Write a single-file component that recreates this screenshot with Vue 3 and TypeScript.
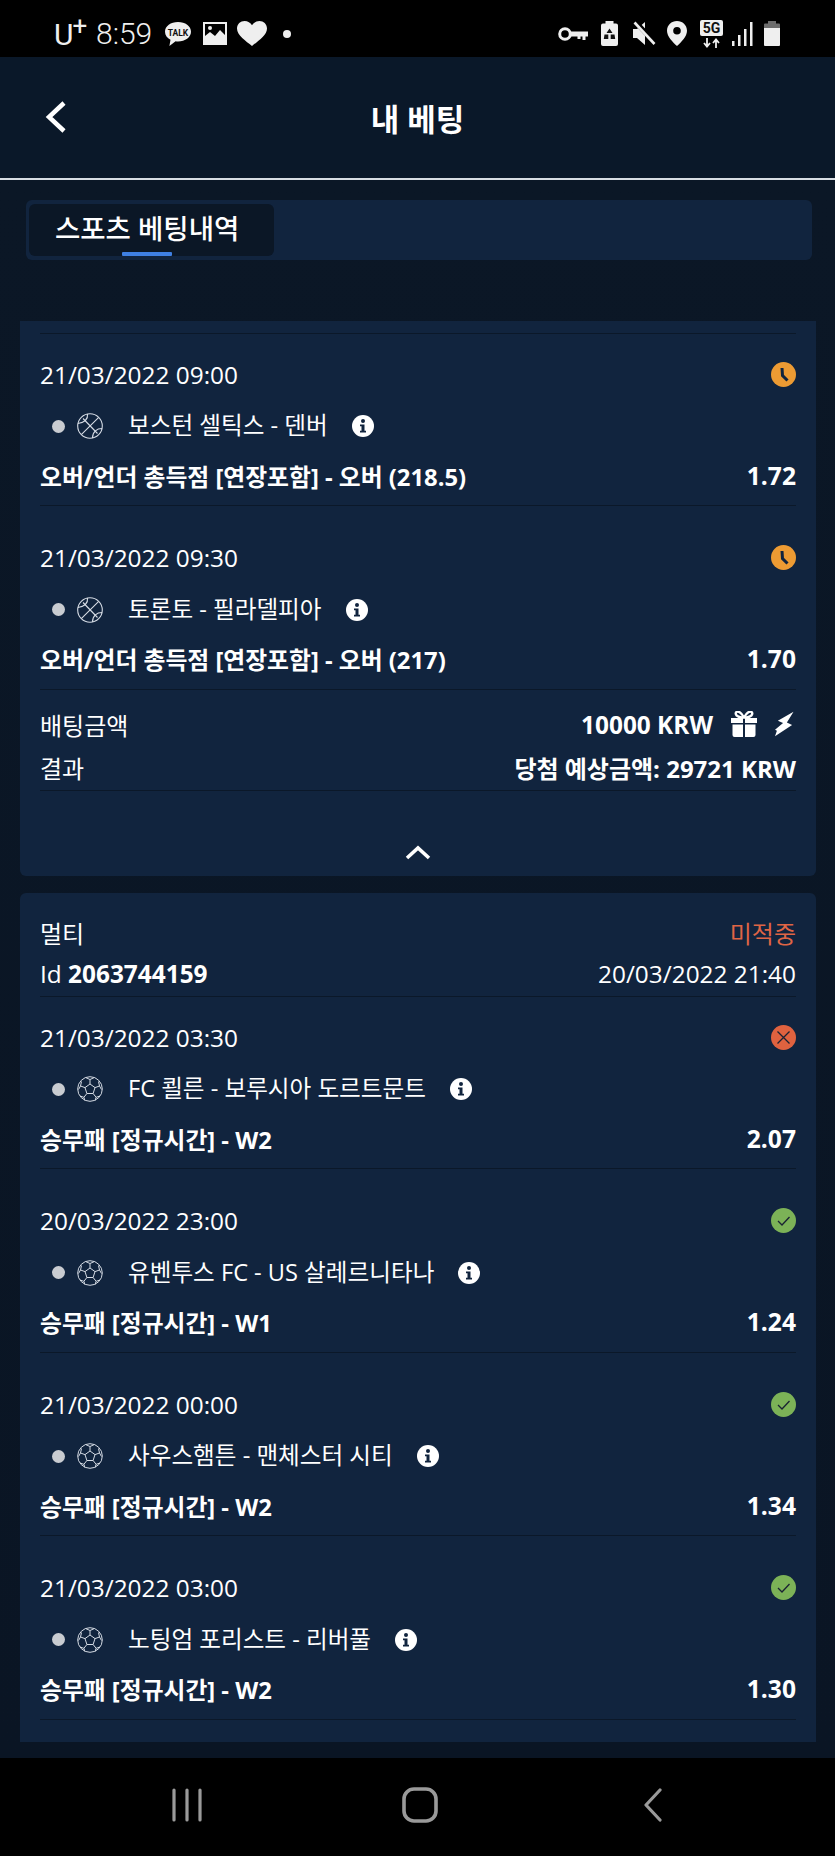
<script setup lang="ts">
interface Bet {
  date: string
  sport: 'basket' | 'soccer'
  name: string
  market: string
  odd: string
  status: 'wait' | 'lost' | 'won'
}

const firstBets: Bet[] = [
  { date: '21/03/2022 09:00', sport: 'basket', name: '보스턴 셀틱스 - 덴버', market: '오버/언더 총득점 [연장포함] - 오버 (218.5)', odd: '1.72', status: 'wait' },
  { date: '21/03/2022 09:30', sport: 'basket', name: '토론토 - 필라델피아', market: '오버/언더 총득점 [연장포함] - 오버 (217)', odd: '1.70', status: 'wait' },
]

const multiBets: Bet[] = [
  { date: '21/03/2022 03:30', sport: 'soccer', name: 'FC 쾰른 - 보루시아 도르트문트', market: '승무패 [정규시간] - W2', odd: '2.07', status: 'lost' },
  { date: '20/03/2022 23:00', sport: 'soccer', name: '유벤투스 FC - US 살레르니타나', market: '승무패 [정규시간] - W1', odd: '1.24', status: 'won' },
  { date: '21/03/2022 00:00', sport: 'soccer', name: '사우스햄튼 - 맨체스터 시티', market: '승무패 [정규시간] - W2', odd: '1.34', status: 'won' },
  { date: '21/03/2022 03:00', sport: 'soccer', name: '노팅엄 포리스트 - 리버풀', market: '승무패 [정규시간] - W2', odd: '1.30', status: 'won' },
]

const groups = [
  { key: 'first', bets: firstBets },
  { key: 'multi', bets: multiBets },
]
</script>

<template>
  <div class="phone">
    <div class="statusbar">
      <div class="status-left">
        <span class="carrier">U<sup>+</sup></span>
        <span class="clock">8:59</span>
        <svg class="talk" width="28" height="26" viewBox="0 0 28 26">
          <path d="M14 1C6.800 1 1 5.200 1 10.700c0 3.400 2.200 6.300 5.500 8.100L5.400 25l6.200-4.700c.8.100 1.600.2 2.400.2 7.200 0 13-4.400 13-9.800C27 5.200 21.200 1 14 1z" fill="#efefef" />
          <text x="14" y="14.500" text-anchor="middle" class="talk-text">TALK</text>
        </svg>
        <svg class="pic" width="24" height="23" viewBox="0 0 24 23">
          <path fill-rule="evenodd" d="M0 0h24v23H0zM2 2v12l5-4 5 4 5-6 5 5V2z" fill="#efefef" />
          <circle cx="7" cy="6" r="2" fill="#efefef" />
        </svg>
        <svg class="heart" width="30" height="25" viewBox="0 0 30 25">
          <path d="M15 25C9 20 0 14.500 0 7.500 0 3 3.500 0 7.500 0 10.800 0 13.500 1.800 15 4.300 16.500 1.800 19.200 0 22.500 0 26.500 0 30 3 30 7.500 30 14.500 21 20 15 25z" fill="#efefef" />
        </svg>
        <span class="status-dot"></span>
      </div>
      <div class="status-right">
        <svg class="key" width="30" height="14" viewBox="0 0 30 14">
          <circle cx="7" cy="7" r="5.300" fill="none" stroke="#efefef" stroke-width="3" />
          <path d="M12 4.500h18v5h-2.500V13h-3V9.500h-2V12h-3V9.500H12z" fill="#efefef" />
        </svg>
        <svg class="recycle" width="17" height="25" viewBox="0 0 17 25">
          <path d="M4.500 0h8v2.500h2.500a2 2 0 0 1 2 2V23a2 2 0 0 1-2 2H2a2 2 0 0 1-2-2V4.500a2 2 0 0 1 2-2h2.500z" fill="#efefef" />
          <path d="M8.500 7.500l3 4.500H5.500zM3.500 13.500h3.800v4.500H2.800zM9.700 13.500h3.800l.7 4.500H9.700z" fill="#111" />
        </svg>
        <svg class="mute" width="23" height="25" viewBox="0 0 23 25">
          <path d="M0 8h4l8-7v9l5 5v1l-5-5v13l-8-7H0z" fill="#efefef" />
          <path d="M2.500 1l20 21" stroke="#000" stroke-width="5" />
          <path d="M1.500 1.500l20 21.500" stroke="#efefef" stroke-width="2.600" />
        </svg>
        <svg class="pin" width="20" height="25" viewBox="0 0 20 25">
          <path fill-rule="evenodd" d="M10 0c5.500 0 10 4.200 10 9.700 0 5.700-5.500 11-10 15.300C5.500 20.700 0 15.400 0 9.700 0 4.200 4.500 0 10 0zm0 6a3.800 3.800 0 1 0 0 7.600A3.800 3.800 0 0 0 10 6z" fill="#efefef" />
        </svg>
        <div class="net">
          <span class="five-g">5G</span>
          <svg width="17" height="10" viewBox="0 0 17 10">
            <path d="M4 0v8M1 5l3 3.500L7 5M13 10V2M10 5l3-3.500L16 5" fill="none" stroke="#efefef" stroke-width="1.800" />
          </svg>
        </div>
        <svg class="signal" width="21" height="24" viewBox="0 0 21 24">
          <rect x="0" y="19" width="2.500" height="5" fill="#efefef" />
          <rect x="6" y="13" width="2.500" height="11" fill="#efefef" />
          <rect x="12" y="7" width="2.500" height="17" fill="#efefef" />
          <rect x="18" y="0" width="2.500" height="24" fill="#efefef" />
        </svg>
        <svg class="battery" width="16" height="25" viewBox="0 0 16 25">
          <path d="M4 0h8v2.500h3a1 1 0 0 1 1 1V7H0V3.500a1 1 0 0 1 1-1h3z" fill="#6d6d6d" />
          <path d="M0 7h16v17a1 1 0 0 1-1 1H1a1 1 0 0 1-1-1z" fill="#efefef" />
        </svg>
      </div>
    </div>

    <header class="topbar">
      <svg class="back" width="22" height="34" viewBox="0 0 22 34">
        <path d="M19 3L4 17l15 14" fill="none" stroke="#fff" stroke-width="4.500" />
      </svg>
      <h1>내 베팅</h1>
    </header>

    <main class="content">
      <div class="tabs">
        <div class="tab">
          스포츠 베팅내역
          <span class="tab-line"></span>
        </div>
      </div>

      <section v-for="group in groups" :key="group.key" class="card" :class="group.key">
        <div v-if="group.key === 'multi'" class="multi-head">
          <div class="line-between">
            <span class="label">멀티</span>
            <span class="label lost-text">미적중</span>
          </div>
          <div class="line-between">
            <span>Id <b>2063744159</b></span>
            <span>20/03/2022 21:40</span>
          </div>
        </div>
        <div v-else class="top-rule"></div>

        <div v-for="bet in group.bets" :key="bet.date" class="bet">
          <div class="line-between date-line">
            <span>{{ bet.date }}</span>
            <svg v-if="bet.status === 'wait'" width="25" height="25" viewBox="0 0 25 25">
              <circle cx="12.500" cy="12.500" r="12.500" fill="#ed9b33" />
              <path d="M11 6l0.500 7.500 5 5" fill="none" stroke="#11243e" stroke-width="3" />
            </svg>
            <svg v-else-if="bet.status === 'lost'" width="25" height="25" viewBox="0 0 25 25">
              <circle cx="12.500" cy="12.500" r="12.500" fill="#e0623f" />
              <path d="M6.500 6.500l12 12M18.500 6.500l-12 12" stroke="#1a2233" stroke-width="1.300" />
            </svg>
            <svg v-else width="25" height="25" viewBox="0 0 25 25">
              <circle cx="12.500" cy="12.500" r="12.500" fill="#7cb257" />
              <path d="M7 13l4 4 7.500-8" fill="none" stroke="#1a2233" stroke-width="1.300" />
            </svg>
          </div>
          <div class="match">
            <span class="live-dot"></span>
            <svg v-if="bet.sport === 'basket'" class="sport" width="26" height="26" viewBox="0 0 26 26">
              <g fill="none" stroke="#d5dbe4" stroke-width="1.100">
                <circle cx="13" cy="13" r="12.300" />
                <path d="M4.300 21.700L21.700 4.300M6 5.500l14.500 15" />
                <path d="M10.500 1C11 5 9 9 1 10.500M25 15.500c-5 0-9.500 3-9.500 9.500" />
              </g>
            </svg>
            <svg v-else class="sport" width="26" height="26" viewBox="0 0 26 26">
              <g fill="none" stroke="#d5dbe4" stroke-width="1">
                <circle cx="13" cy="13" r="12.300" />
                <path d="M13 8l5 3.600-1.900 5.900H9.900L8 11.600z" />
                <path d="M13 8V3.500L8.500 1.500M13 3.500l4.500-2M18 11.600l4.500-1.600 2 3.500M22.500 10l-1-4.500M8 11.600L3.500 10l-2 3.500M3.500 10l1-4.500M16.100 17.500l3 3.800-1 3.200M19.100 21.300l4-1.300M9.900 17.500l-3 3.800 1 3.200M6.900 21.300l-4-1.300" />
              </g>
            </svg>
            <span class="match-name">{{ bet.name }}</span>
            <svg class="info" width="22" height="22" viewBox="0 0 22 22">
              <circle cx="11" cy="11" r="11" fill="#fff" />
              <circle cx="11" cy="6" r="2" fill="#11243e" />
              <path d="M8 9.500h4.500v6.200H14V17.500H8v-1.800h1.500v-4.400H8z" fill="#11243e" />
            </svg>
          </div>
          <div class="line-between market">
            <span>{{ bet.market }}</span>
            <span class="odd">{{ bet.odd }}</span>
          </div>
        </div>

        <template v-if="group.key === 'first'">
          <div class="line-between stake">
            <span class="label">배팅금액</span>
            <span class="stake-right">
              <b>10000 KRW</b>
              <svg width="26" height="26" viewBox="0 0 26 26">
                <path d="M0 7h12v5H0zM14 7h12v5H14zM1.500 13.500H12V26H3.500a2 2 0 0 1-2-2zM14 13.500h10.500V24a2 2 0 0 1-2 2H14z" fill="#fff" />
                <path d="M13 6.500C10 1 7 0 5.500 1 3.500 2.500 5 6.500 13 6.500zM13 6.500C16 1 19 0 20.500 1 22.500 2.500 21 6.500 13 6.500z" fill="none" stroke="#fff" stroke-width="2.400" />
              </svg>
              <svg width="19" height="26" viewBox="0 0 20 26">
                <path d="M19.500 0L3 9.500l5.500 2.500L0 19l2 1L0 26l18-12-5.500-2.500z" fill="#fff" />
              </svg>
            </span>
          </div>
          <div class="line-between result">
            <span class="label">결과</span>
            <b>당첨 예상금액: 29721 KRW</b>
          </div>
          <div class="chevron-row">
            <svg width="26" height="15" viewBox="0 0 26 15">
              <path d="M2 13L13 3l11 10" fill="none" stroke="#fff" stroke-width="3.600" />
            </svg>
          </div>
        </template>
      </section>
    </main>

    <nav class="navbar">
      <svg width="32" height="34" viewBox="0 0 32 34">
        <path d="M3 2v30M16 2v30M29 2v30" stroke="#9a9a9a" stroke-width="3.200" stroke-linecap="round" fill="none" />
      </svg>
      <svg class="home" width="36" height="36" viewBox="0 0 36 36">
        <rect x="2" y="2" width="32" height="32" rx="10" fill="none" stroke="#9a9a9a" stroke-width="3.600" />
      </svg>
      <svg width="20" height="34" viewBox="0 0 20 34">
        <path d="M17 2L3 17l14 15" fill="none" stroke="#9a9a9a" stroke-width="3.200" stroke-linecap="round" stroke-linejoin="round" />
      </svg>
    </nav>
  </div>
</template>

<style scoped>
.phone {
  width: 835px;
  height: 1856px;
  display: flex;
  flex-direction: column;
  overflow: hidden;
  background: #0b1626;
  color: #fff;
  font-family: "Open Sans", "Noto Sans CJK KR", sans-serif;
  font-size: 24.400px;
}

.statusbar {
  height: 57px;
  flex: none;
  box-sizing: border-box;
  background: #000;
  display: flex;
  justify-content: space-between;
  align-items: center;
  padding: 10px 55px 0 54px;
  color: #efefef;
}
.status-left,
.status-right {
  display: flex;
  align-items: center;
}
.carrier {
  font-family: Roboto, sans-serif;
  font-size: 30px;
  line-height: 30px;
  margin-top: 3px;
  width: 34px;
  white-space: nowrap;
}
.carrier sup {
  font-size: 26px;
  line-height: 0;
  vertical-align: 10px;
  margin-left: -1px;
}
.clock {
  font-family: Roboto, sans-serif;
  font-weight: 300;
  font-size: 30px;
  margin-left: 8px;
  width: 68px;
}
.talk-text {
  font-family: Roboto, sans-serif;
  font-size: 8.500px;
  font-weight: 700;
  fill: #111;
}
.pic {
  margin-left: 11px;
}
.heart {
  margin-left: 10px;
}
.status-dot {
  width: 8px;
  height: 8px;
  border-radius: 50%;
  background: #efefef;
  margin-left: 16px;
}
.recycle {
  margin-left: 13px;
}
.mute {
  margin-left: 15px;
}
.pin {
  margin-left: 11px;
}
.net {
  display: flex;
  flex-direction: column;
  align-items: center;
  width: 23px;
  margin-left: 13px;
}
.five-g {
  background: #efefef;
  color: #111;
  font-family: Roboto, sans-serif;
  font-size: 14px;
  font-weight: 700;
  line-height: 16px;
  width: 23px;
  text-align: center;
  border-radius: 2px;
  margin-bottom: 2px;
}
.signal {
  margin-left: 9px;
}
.battery {
  margin-left: 11px;
}

.topbar {
  height: 123px;
  flex: none;
  box-sizing: border-box;
  display: flex;
  align-items: center;
  justify-content: center;
  position: relative;
  background: #0a1829;
  border-bottom: 2px solid #d8dde3;
}
.back {
  position: absolute;
  left: 45px;
  top: 43px;
}
.topbar h1 {
  margin: 0;
  font-size: 31px;
  font-weight: 700;
}

.content {
  flex: 1;
  min-height: 0;
  overflow: hidden;
  padding: 20px 19px 0 20px;
  background: linear-gradient(#0b1726, #0a1524);
}
.tabs {
  height: 60px;
  margin: 0 4px 0 6px;
  padding: 4px 3px;
  box-sizing: border-box;
  background: #11243e;
  border-radius: 6px;
}
.tab {
  position: relative;
  width: 245px;
  height: 52px;
  box-sizing: border-box;
  padding-left: 26px;
  background: #0b1726;
  border-radius: 6px;
  font-size: 27.500px;
  font-weight: 500;
  line-height: 50px;
}
.tab-line {
  position: absolute;
  left: 93px;
  bottom: 0;
  width: 50px;
  height: 4px;
  background: #3f80e3;
  border-radius: 1px;
}

.card {
  background: #11243e;
  border-radius: 6px;
  padding: 0 20px;
  margin-bottom: 17px;
}
.card.first {
  margin-top: 61px;
  height: 555px;
  box-sizing: border-box;
  padding-top: 12px;
  border-radius: 0 0 6px 6px;
}
.card.multi {
  padding-bottom: 11px;
  border-radius: 6px 6px 0 0;
}
.top-rule {
  border-bottom: 1px solid #0b1829;
}
.line-between {
  display: flex;
  justify-content: space-between;
  align-items: center;
}
.label {
  font-size: 24px;
}
.multi-head {
  border-bottom: 1px solid #0b1829;
  padding-top: 19px;
  height: 104px;
  box-sizing: border-box;
}
.multi-head .line-between {
  height: 41px;
}
.lost-text {
  color: #df6545;
}
.bet {
  height: 172px;
  box-sizing: border-box;
  padding-top: 25px;
  margin-bottom: 11.500px;
  border-bottom: 1px solid #0b1829;
}
.date-line {
  height: 30px;
}
.match {
  display: flex;
  align-items: center;
  height: 40px;
  margin-top: 17px;
  padding-left: 12px;
}
.live-dot {
  width: 13px;
  height: 13px;
  border-radius: 50%;
  background: #c9ccd1;
  flex: none;
}
.sport {
  margin-left: 12px;
  flex: none;
}
.match-name {
  margin-left: 25px;
  margin-top: -4px;
  font-size: 23.600px;
}
.info {
  margin-left: 24px;
  flex: none;
}
.market {
  height: 34px;
  margin-top: 12px;
  font-size: 23.800px;
  font-weight: 700;
}
.odd {
  font-size: 24.600px;
}
.stake {
  height: 41px;
  margin-top: 14px;
}
.stake-right {
  display: flex;
  align-items: center;
  gap: 18px;
  margin-right: 2px;
}
.result {
  height: 46px;
  box-sizing: border-box;
  border-bottom: 1px solid #0b1829;
}
.result b {
  font-size: 24px;
}
.chevron-row {
  display: flex;
  justify-content: center;
  margin-top: 54px;
}

.navbar {
  height: 98px;
  flex: none;
  box-sizing: border-box;
  background: #000;
  display: flex;
  align-items: center;
  justify-content: space-between;
  padding: 0 172px 4px 171px;
}
.home {
  margin-right: 6px;
}
</style>

<style>
html, body {
  margin: 0;
  background: #0b1626;
}
</style>
